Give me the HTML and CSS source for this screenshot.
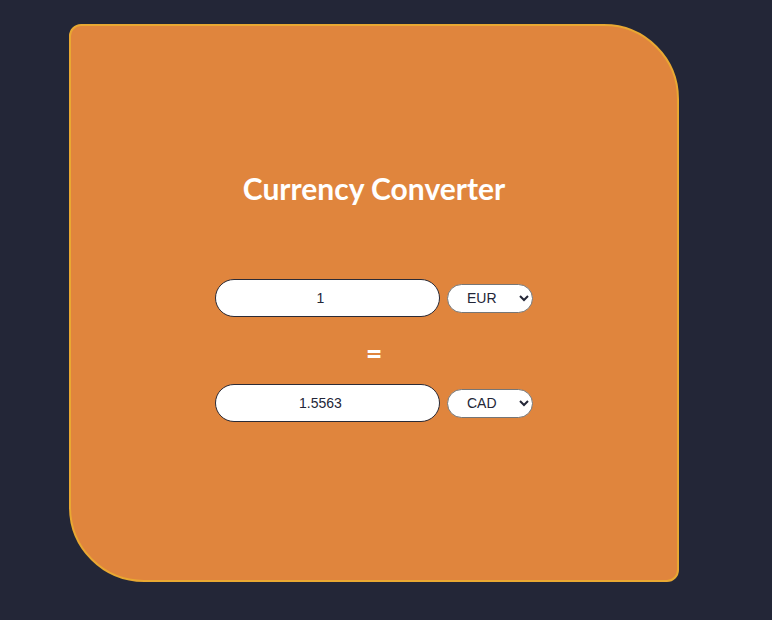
FILE: index.html
```html
<!DOCTYPE html>
<html lang="en">
<head>
<meta charset="utf-8">
<title>Currency Converter</title>
<link rel="stylesheet" href="styles.css">
</head>
<body>
<main class="card">
  <h1 class="title">Currency Converter</h1>
  <div class="row row-from">
    <input class="amount" type="text" value="1">
    <select class="currency">
      <option selected>EUR</option>
      <option>USD</option>
      <option>CAD</option>
    </select>
  </div>
  <div class="equals">=</div>
  <div class="row">
    <input class="amount" type="text" value="1.5563">
    <select class="currency">
      <option>EUR</option>
      <option>USD</option>
      <option selected>CAD</option>
    </select>
  </div>
</main>
</body>
</html>
```
FILE: styles.css
```css
* { box-sizing: border-box; }
html, body { margin: 0; padding: 0; }
body {
  background: #232637;
  width: 772px;
  height: 620px;
  overflow: hidden;
  padding: 24px 0 0 69px;
  font-family: "Liberation Sans", Arial, sans-serif;
}
.card {
  width: 610px;
  height: 558px;
  background: #e0853d;
  border: 2px solid #e9a832;
  border-radius: 12px 75px 12px 75px;
  display: flex;
  flex-direction: column;
  align-items: center;
  padding-top: 142px;
}
.title {
  margin: 0;
  font-family: "Lato", "Open Sans", sans-serif;
  font-weight: 700;
  font-size: 30px;
  line-height: 40px;
  color: #ffffff;
}
.row {
  display: flex;
  align-items: center;
  gap: 7px;
}
.row-from { margin-top: 71px; }
.amount {
  width: 225px;
  height: 38px;
  border: 1px solid #2b2b36;
  border-radius: 19px;
  background: #ffffff;
  text-align: center;
  font-family: "Liberation Sans", Arial, sans-serif;
  font-size: 14px;
  color: #232637;
  outline: none;
  padding: 0 15px 0 1px;
}
.currency {
  width: 86px;
  height: 29px;
  border: 1px solid #767676;
  border-radius: 15px;
  background: #ffffff;
  font-family: "Liberation Sans", Arial, sans-serif;
  font-size: 14px;
  color: #232637;
  padding: 0 6px 0 15px;
}
.equals {
  margin: 24px 0 19px;
  font-family: "Lato", "Open Sans", sans-serif;
  font-weight: 900;
  font-size: 28px;
  line-height: 24px;
  color: #ffffff;
}
```
